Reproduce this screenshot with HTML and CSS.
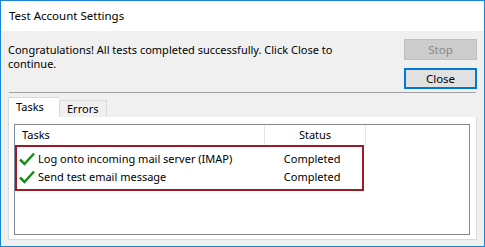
FILE: index.html
```html
<!DOCTYPE html>
<html lang="en">
<head>
    <meta charset="UTF-8">
    <title>Test Account Settings</title>
    <link rel="stylesheet" href="styles.css">
</head>
<body>

    <div class="window">
        <div class="titlebar">Test Account Settings</div>

        <div class="content">
            <div class="top">
                <p class="message">Congratulations! All tests completed successfully. Click Close to<br>continue.</p>
                <div class="buttons">
                    <button class="btn" disabled>Stop</button>
                    <button class="btn default">Close</button>
                </div>
            </div>

            <div class="separator"></div>

            <div class="tabs">
                <div class="tab active">Tasks</div>
                <div class="tab">Errors</div>
            </div>

            <div class="panel">
                <div class="list">
                    <div class="list-head">
                        <div class="col-task">Tasks</div>
                        <div class="col-status">Status</div>
                    </div>
                    <div class="rows">
                        <div class="row">
                            <div class="col-task">
                                <svg class="check" width="16" height="14" viewBox="0 0 16 14"><path d="M1 7.5 L5.5 12 L15 1.5" fill="none" stroke="#1e8a1e" stroke-width="2.5"/></svg>
                                Log onto incoming mail server (IMAP)
                            </div>
                            <div class="col-status">Completed</div>
                        </div>
                        <div class="row">
                            <div class="col-task">
                                <svg class="check" width="16" height="14" viewBox="0 0 16 14"><path d="M1 7.5 L5.5 12 L15 1.5" fill="none" stroke="#1e8a1e" stroke-width="2.5"/></svg>
                                Send test email message
                            </div>
                            <div class="col-status">Completed</div>
                        </div>
                    </div>
                </div>
            </div>
        </div>
    </div>

</body>
</html>
```

FILE: styles.css
```css
body {
    margin: 0;
    font-family: "Noto Sans", "Open Sans", sans-serif;
    font-size: 11px;
    color: #000;
}
.window {
    width: 485px;
    height: 247px;
    box-sizing: border-box;
    border: 1px solid #1883d7;
    background-color: #f0f0f0;
    display: flex;
    flex-direction: column;
}
.titlebar {
    height: 30px;
    line-height: 30px;
    font-size: 11.5px;
    background-color: white;
    padding-left: 8px;
}
.content {
    flex: 1;
    padding: 8px 7px 0 6px;
}
.top {
    display: flex;
    justify-content: space-between;
}
.message {
    margin: 4px 0 0 1px;
    line-height: 14px;
}
.buttons {
    display: flex;
    flex-direction: column;
    gap: 8px;
}
.btn {
    width: 73px;
    height: 21px;
    box-sizing: border-box;
    font-family: inherit;
    font-size: 11.5px;
    background-color: #e1e1e1;
    border: 1px solid #adadad;
    color: #000;
    padding: 0;
}
.btn:disabled {
    background-color: #cccccc;
    border-color: #bfbfbf;
    color: #8a8a8a;
}
.btn.default {
    border: 2px solid #0078d7;
}
.separator {
    height: 1px;
    background-color: #a0a0a0;
    margin: 3px 1px 0 2px;
}
.tabs {
    display: flex;
    align-items: flex-end;
    margin-top: 5px;
    padding-left: 1px;
    height: 19px;
}
.tab {
    height: 16px;
    line-height: 16px;
    padding: 0 8px 0 7px;
    border: 1px solid #d9d9d9;
    border-bottom: none;
    background-color: #f0f0f0;
}
.tab.active {
    height: 19px;
    line-height: 17px;
    width: 35px;
    background-color: white;
    border-right: none;
}
.panel {
    height: 111px;
    margin-left: 1px;
    border: 1px solid #d9d9d9;
    border-top: none;
    background-color: white;
    padding: 7px 6px 4px 5px;
}
.list {
    height: 100%;
    box-sizing: border-box;
    border: 1px solid #828790;
}
.list-head {
    display: flex;
    height: 20px;
    line-height: 20px;
}
.col-task {
    width: 242px;
    padding-left: 7px;
    display: flex;
    align-items: center;
    gap: 3px;
}
.col-status {
    width: 100px;
    text-align: center;
}
.list-head .col-task,
.list-head .col-status {
    border-right: 1px solid #e5e5e5;
}
.rows {
    width: 345px;
    border: 2px solid #9d1b25;
    padding: 3px 0;
}
.row {
    display: flex;
    height: 18px;
    line-height: 18px;
}
.rows .col-task {
    padding-left: 2px;
}
.rows .col-status {
    padding-left: 2px;
}
.check {
    flex: none;
}
```
